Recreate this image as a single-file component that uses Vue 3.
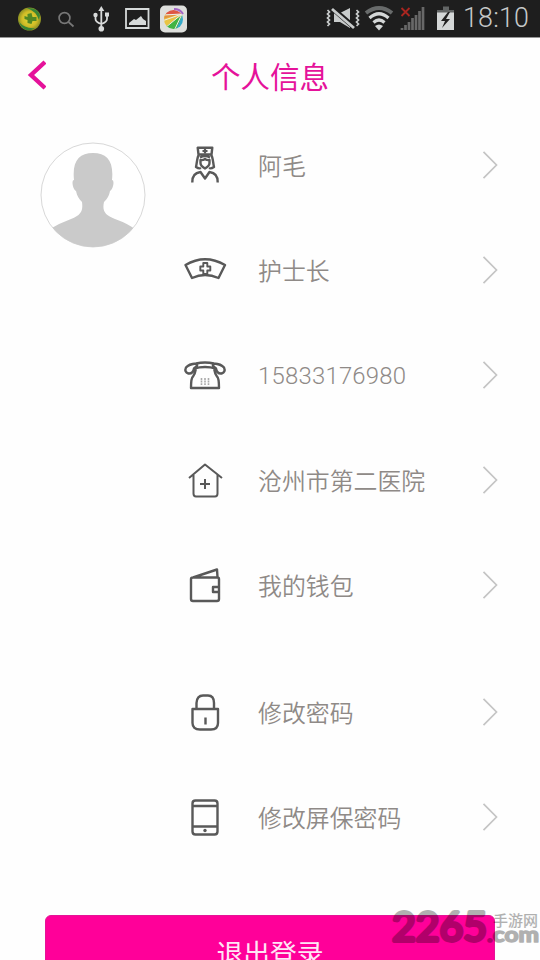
<script setup>
const rows = [
  { icon: 'nurse', text: '阿毛' },
  { icon: 'cap', text: '护士长' },
  { icon: 'phone', text: '15833176980' },
  { icon: 'house', text: '沧州市第二医院' },
  { icon: 'wallet', text: '我的钱包' },
  { icon: 'lock', text: '修改密码', gap: true },
  { icon: 'mobile', text: '修改屏保密码' },
]
</script>

<template>
  <div class="screen">
    <header class="status">
      <svg class="status-left" width="200" height="37" viewBox="0 0 200 37">
        <defs>
          <radialGradient id="ball"><stop offset="0" stop-color="#e0dc3a" /><stop offset=".65" stop-color="#d0bc26" /><stop offset="1" stop-color="#8a8f23" /></radialGradient>
          <clipPath id="pin"><circle cx="173.500" cy="19.500" r="9.500" /></clipPath>
        </defs>
        <circle cx="29.500" cy="19" r="11.500" fill="url(#ball)" />
        <path d="M27 8Q37 7 40 15L39 20Q36 11 27 8M19 22Q25 29 35 28Q30 32 24 29Q20 26 19 22" fill="#388536" />
        <path d="M27.500 14l4-1 1 4 4 0 0 4-4 0-1 3-4-1 0-3-3-1 0-3 3 1z" fill="#528823" />
        <g fill="none" stroke="#777" stroke-width="1.700"><circle cx="64.500" cy="18" r="5.400" /><path d="M68.500 22l5 4.500" /></g>
        <g fill="none" stroke="#d8dada" stroke-width="1.800"><path d="M101.300 10v18M95.500 15v4q0 3 5.800 5M107 14v5q0 3-5.700 5" /></g>
        <path d="M101.300 6l3 5h-6z" fill="#d8dada" /><circle cx="95.500" cy="15" r="2.200" fill="#d8dada" /><path d="M105 12.500h4v4h-4z" fill="#d8dada" /><circle cx="101.300" cy="28.700" r="2.800" fill="#d8dada" />
        <path d="M126 9h22.500v19H126z" fill="none" stroke="#d5d9d9" stroke-width="1.800" />
        <path d="M129 25v-2l5-4 2 1 5-4 2 3 3 2v4z" fill="#d5d9d9" />
        <rect x="160" y="5.500" width="27" height="27" rx="5" fill="#dedfdc" />
        <g clip-path="url(#pin)">
          <path d="M163 30L160 13L184 14Z" fill="#e9c443" /><path d="M160 20L160 12L184 13Z" fill="#e2943d" />
          <path d="M165 14Q170 7 179 11L183 14Z" fill="#df5744" /><path d="M164 28L183 14L176 32Z" fill="#42b443" /><path d="M175 32L183 14L187 24Z" fill="#34a9ca" />
          <path d="M163 15L182 14L162 21M182 14L165 28M182 14L174 31" stroke="#eee" stroke-width="1" fill="none" />
        </g>
        <path d="M174 9q6 0 9 5" fill="none" stroke="#a466c5" stroke-width="2" />
      </svg>
      <svg class="status-right" width="140" height="37" viewBox="320 0 140 37">
        <g fill="none" stroke="#c9cccc" stroke-width="1.700"><path d="M327.500 10l2 2-2 2 2 2-2 2 2 2-2 2 2 2-2 2M356.500 10l2 2-2 2 2 2-2 2 2 2-2 2 2 2-2 2" /></g>
        <path d="M334 13h6l10-5v20l-10-6h-6z" fill="#c9cccc" /><path d="M332 8l23 20" stroke="#1e1e1e" stroke-width="5" /><path d="M332 9l22 19" stroke="#c9cccc" stroke-width="2.800" />
        <path d="M366 13Q379 3 392 13" fill="none" stroke="#686b6b" stroke-width="4" />
        <g fill="none" stroke="#d4d7d7" stroke-width="3.200"><path d="M369.500 18Q379 9.500 388.500 18M373.500 22.500Q379 17.500 384.500 22.500" /></g><path d="M375 26q4-3 8 0l-4 4.500z" fill="#d4d7d7" />
        <path d="M402 30v-2M405.500 30v-5M409 30v-8M412.500 30v-12M416 30v-15M419.500 30v-19M423 30V7" stroke="#686868" stroke-width="2.700" />
        <path d="M401.500 8l8 8m0-8l-8 8" stroke="#aa2620" stroke-width="1.800" />
        <path d="M443 6.500h6V10h5v4h-17v-4h6z" fill="#626565" /><path d="M437 12.500h17V30h-17z" fill="#d4d7d7" /><path d="M448 12l-7 9h4l-3 7 8-9h-4l4-7z" fill="#202020" />
      </svg>
      <time>18:10</time>
    </header>

    <div class="titlebar">
      <svg class="back" width="20" height="32" viewBox="0 0 20 32"><path d="M19 3L5 16L19 29" fill="none" stroke="#e5129a" stroke-width="4.400" /></svg>
      <h1>个人信息</h1>
    </div>

    <main>
      <svg class="avatar" width="106" height="106" viewBox="0 0 106 106">
        <defs><clipPath id="avatar-clip"><circle cx="53" cy="53" r="52" /></clipPath></defs>
        <circle cx="53" cy="53" r="52" fill="#fff" stroke="#d8d8d8" />
        <path clip-path="url(#avatar-clip)" fill="#cacaca" d="M34 38C32 19 39 11 53 11C67 11 74 19 72 38C75 38 73 48 70 49C69 55 66 58 64 60C62 69 65 73 75 77Q89 82 96 88V106H10V87Q20 81 31 77C42 73 43 68 42 60C39 57 37 54 36 49C33 48 31 38 34 38Z" />
      </svg>
      <ul>
        <li v-for="row in rows" :key="row.icon" :class="{ gap: row.gap }">
          <svg class="icon" width="44" height="44" viewBox="0 0 44 44">
            <g v-if="row.icon === 'nurse'">
              <path d="M14.700 4.700H29.300L28.500 11.500H15.500ZM16 11.500C14 14 14 20 13 24Q16 26 18 25M28 11.500C30 14 30 20 31 24Q28 26 26 25M17 14.500Q22 11.500 27 14.500M17.500 17Q20 17.500 22 16Q24 17.500 26.500 17V20Q26.500 23 22 25.500Q17.500 23 17.500 20ZM9.300 39.500Q9 30 17.500 29L22 35.500L26.500 29Q35 30 34.700 39.500" /><path d="M22 5.500v5M19.500 8h5" stroke-width="2.200" />
            </g>
            <g v-else-if="row.icon === 'cap'"><path d="M2.500 17Q22 5.500 42 17L35.500 30Q22 24 9 30Z" /><path d="M20.300 15h4v3.500h3v4h-3v3.500h-4V22.500h-3v-4h3z" stroke-width="1.900" /></g>
            <g v-else-if="row.icon === 'phone'"><path d="M11 15.500Q10 21 5.500 20.500Q1 19 3 14.500Q6 11 13 10.500Q22 8.500 31 10.500Q38 11 41 14.500Q43 19 38.500 20.500Q34 21 33 15.500Q22 12.500 11 15.500ZM13 10.500Q16 12 11 15.500M31 10.500Q28 12 33 15.500M13 15.500Q12 21 10 23.500Q8 25 8 35H36Q36 25 34 23.500Q32 21 31 15.500" /><path d="M18.500 25v7M22 25v7M25.500 25v7" stroke="#aaa" stroke-width="1.600" stroke-dasharray="2 .6" /></g>
            <g v-else-if="row.icon === 'house'" class="fine"><path d="M6 20L22 6.500L39 20M10.500 17V35.500Q10.500 38.500 13 38.500H32Q34.500 38.500 34.500 35.500V17M22 21v10M17 26h10" /></g>
            <g v-else-if="row.icon === 'wallet'"><path d="M10 14.500H34.500Q36 14.500 36 16V36Q36 38 34 38H10Q8 38 8 36V16Q8 14.500 10 14.500L34 6.500L34.500 14M36 24H30V29H36" /></g>
            <g v-else-if="row.icon === 'lock'"><path d="M9.500 19H35V33Q35 39.500 28 39.500H17Q9.500 39.500 9.500 33ZM13.500 18V13Q14 5.500 20 5.500H25Q31 5.500 31 13V18M22.500 27.500v7" /></g>
            <g v-else><path d="M12.500 5.500H31.500Q34.500 5.500 34.500 8.500V36.500Q34.500 39.500 31.500 39.500H12.500Q9.500 39.500 9.500 36.500V8.500Q9.500 5.500 12.500 5.500ZM10 11H34M10 31.500H34" /><circle cx="22" cy="35.500" r="1.700" fill="#595959" stroke="none" /></g>
          </svg>
          <span class="label" :class="{ number: row.icon === 'phone' }">{{ row.text }}</span>
          <svg class="arrow" width="16" height="28" viewBox="0 0 16 28"><path d="M1.500 .800L14.500 14L1.500 27.200" fill="none" stroke="#c5c5c5" stroke-width="1.700" /></svg>
        </li>
      </ul>
    </main>
    <button>退出登录</button>
    <svg class="watermark" width="152" height="50" viewBox="388 905 152 50">
      <g fill="#000" stroke="#000" opacity=".3" stroke-linejoin="round" stroke-linecap="round">
        <text class="wm-number" x="392" y="941" textLength="95" lengthAdjust="spacingAndGlyphs" stroke-width="3.800">2265</text>
        <text class="wm-cn" x="493" y="926" textLength="45" lengthAdjust="spacingAndGlyphs" stroke-width=".1">手游网</text>
        <text class="wm-com" x="487" y="941.500" textLength="52" lengthAdjust="spacingAndGlyphs" stroke-width="1.600">.com</text>
      </g>
    </svg>
  </div>
</template>

<style>
body { margin: 0; overflow: hidden; }
</style>
<style scoped>
.screen { position: relative; width: 540px; height: 960px; overflow: hidden; background: #fefefe; font-family: Roboto, "Noto Sans CJK SC", sans-serif; }
.status { display: flex; height: 38px; background: #1e1e1e; border-bottom: 1px solid #969696; box-sizing: border-box; }
.status-right { margin-left: 120px; }
time { color: #c6c9c9; font-size: 26.800px; line-height: 37px; font-weight: 300; letter-spacing: .2px; margin-left: 3px; }
.titlebar { display: flex; align-items: center; height: 74px; padding-left: 26px; }
.back { margin-top: -1px; }
h1 { width: 448px; margin: 5px 0 0; text-align: center; color: #e5129a; font-size: 29.500px; line-height: 40px; font-weight: 400; }
main { display: flex; align-items: flex-start; padding-left: 40px; }
.avatar { margin-top: 30px; }
ul { list-style: none; margin: 0 0 0 37px; padding: 0; width: 315px; }
li { display: flex; align-items: center; height: 105px; }
.gap { margin-top: 22px; }
.icon { fill: none; stroke: #595959; stroke-width: 2.400; stroke-linejoin: round; }
.fine { stroke-width: 2; }
.label { flex: 1; margin-left: 31px; padding-top: 4px; color: #8f8a87; font-size: 23.900px; line-height: 34px; font-weight: 350; white-space: nowrap; }
.number { padding-top: 2px; letter-spacing: .230px; }
.arrow { flex: none; }
button { display: block; width: 450px; height: 72px; margin: 46px auto 0; padding: 3px 0 0; border: 1px solid #e51496; border-radius: 6px; background: #ff0099; color: #ffe5f5; font: 400 26.800px/38px "Noto Sans CJK SC", sans-serif; }
.watermark { position: absolute; left: 388px; top: 905px; }
.wm-number { font: 400 40px Lato, sans-serif; }
.wm-cn { font: 500 14.500px "Noto Sans CJK SC", sans-serif; }
.wm-com { font: 700 21px Lato, sans-serif; }
</style>
